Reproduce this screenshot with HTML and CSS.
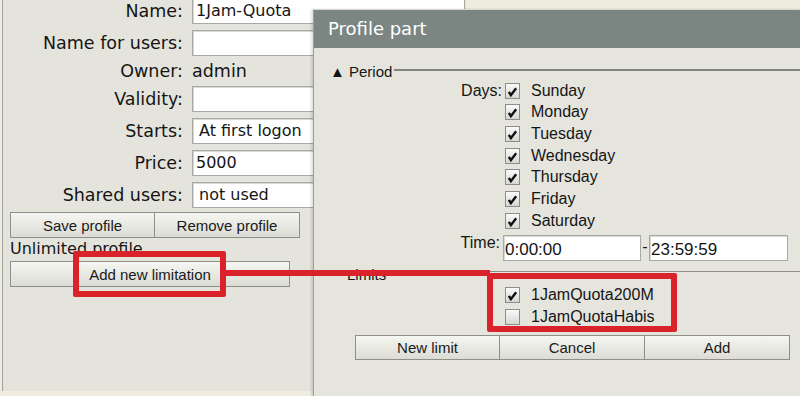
FILE: index.html
```html
<!DOCTYPE html>
<html lang="en">
<head>
  <meta charset="UTF-8">
  <title>Profile part</title>
  <link rel="stylesheet" href="styles.css">
</head>
<body>
  <div class="panel">
    <div class="form">
      <label>Name:</label><div class="field">1Jam-Quota</div>
      <label>Name for users:</label><div class="field"></div>
      <label>Owner:</label><div class="value">admin</div>
      <label>Validity:</label><div class="field"></div>
      <label>Starts:</label><div class="field pad">At first logon</div>
      <label>Price:</label><div class="field">5000</div>
      <label>Shared users:</label><div class="field pad">not used</div>
    </div>
    <div class="btn-row">
      <button class="btn">Save profile</button>
      <button class="btn">Remove profile</button>
    </div>
    <div class="section">Unlimited profile</div>
    <button class="btn wide">Add new limitation</button>
  </div>

  <div class="dialog">
    <div class="title">Profile part</div>
    <div class="legend"><span class="legend-text">&#9650; Period</span><span class="legend-line"></span></div>

    <div class="days">
      <div class="cap">Days:</div>
      <div class="check"><span class="box on"><svg viewBox="0 0 16 16"><path d="M3.5 8.5 L6 12.5 L12.5 4" /></svg></span></div>
      <div class="day">Sunday</div>
      <div></div>
      <div class="check"><span class="box on"><svg viewBox="0 0 16 16"><path d="M3.5 8.5 L6 12.5 L12.5 4" /></svg></span></div>
      <div class="day">Monday</div>
      <div></div>
      <div class="check"><span class="box on"><svg viewBox="0 0 16 16"><path d="M3.5 8.5 L6 12.5 L12.5 4" /></svg></span></div>
      <div class="day">Tuesday</div>
      <div></div>
      <div class="check"><span class="box on"><svg viewBox="0 0 16 16"><path d="M3.5 8.5 L6 12.5 L12.5 4" /></svg></span></div>
      <div class="day">Wednesday</div>
      <div></div>
      <div class="check"><span class="box on"><svg viewBox="0 0 16 16"><path d="M3.5 8.5 L6 12.5 L12.5 4" /></svg></span></div>
      <div class="day">Thursday</div>
      <div></div>
      <div class="check"><span class="box on"><svg viewBox="0 0 16 16"><path d="M3.5 8.5 L6 12.5 L12.5 4" /></svg></span></div>
      <div class="day">Friday</div>
      <div></div>
      <div class="check"><span class="box on"><svg viewBox="0 0 16 16"><path d="M3.5 8.5 L6 12.5 L12.5 4" /></svg></span></div>
      <div class="day">Saturday</div>
    </div>

    <div class="time-row">
      <div class="cap time-cap">Time:</div>
      <div class="field time">0:00:00</div>
      <div class="dash">-</div>
      <div class="field time">23:59:59</div>
    </div>

    <div class="sep"></div>
    <div class="limits-cap">Limits</div>
    <div class="days limits">
      <div></div>
      <div class="check"><span class="box on"><svg viewBox="0 0 16 16"><path d="M3.5 8.5 L6 12.5 L12.5 4" /></svg></span></div>
      <div class="day">1JamQuota200M</div>
      <div></div>
      <div class="check"><span class="box"></span></div>
      <div class="day">1JamQuotaHabis</div>
    </div>

    <div class="dlg-buttons">
      <button class="btn">New limit</button>
      <button class="btn">Cancel</button>
      <button class="btn">Add</button>
    </div>
  </div>

  <!-- annotation -->
  <div class="mark mark-left"></div>
  <div class="mark-line"></div>
  <div class="mark mark-right"></div>
</body>
</html>
```
FILE: styles.css
```css
body {
  margin: 0;
  width: 800px;
  height: 396px;
  overflow: hidden;
  background: #efede0;
  color: #151515;
  font-family: "DejaVu Sans", sans-serif;
  position: relative;
}

.panel {
  margin-left: 2px;
  width: 464px;
  height: 396px;
  border-left: 1px solid #a3a39d;
  background: #e4e4dc;
  box-sizing: border-box;
}

.form {
  display: grid;
  grid-template-columns: 180px 273px;
  grid-template-rows: 32px 32px 24px 32px 32px 32px 32px;
  column-gap: 9px;
  align-items: center;
  margin-top: -5px;
}

.form label {
  text-align: right;
  font-size: 17.5px;
}

.field {
  height: 26px;
  background: #fff;
  border: 1px solid #a9a9a4;
  box-sizing: border-box;
  font-size: 16px;
  line-height: 24px;
  padding-left: 3px;
  box-shadow: inset 1px 1px 0 #d8d8d4;
}

.field.pad {
  padding-left: 6px;
}

.value {
  font-size: 17.5px;
}

.btn {
  font-family: "Liberation Sans", Arial, sans-serif;
  font-size: 15px;
  color: #1a1a1a;
  height: 26px;
  padding: 0;
  border: 1px solid #8f8f8a;
  background: linear-gradient(#f6f6f2, #dcdcd5);
  box-sizing: border-box;
}

.btn-row {
  display: flex;
  margin: 1px 0 0 7px;
}

.btn-row .btn {
  width: 145px;
}

.btn-row .btn + .btn {
  border-left: none;
}

.section {
  margin-left: 7px;
  font-size: 16px;
  line-height: 22px;
}

.wide {
  display: block;
  margin: 1px 0 0 7px;
  width: 280px;
}

.dialog {
  position: absolute;
  left: 313px;
  top: 9px;
  right: 0;
  bottom: 0;
  background: #e5e5de;
  border-left: 1px solid #9d9d98;
  border-top: 1px solid #d8d8d0;
  box-shadow: -2px 0 2px rgba(0, 0, 0, 0.12);
}

.title {
  height: 38px;
  background: #7b8683;
  color: #fff;
  font-size: 18px;
  line-height: 38px;
  padding-left: 14px;
}

.legend {
  display: flex;
  align-items: center;
  margin-top: 14px;
  height: 18px;
  padding-left: 16px;
}

.legend-text {
  font-family: "Liberation Sans", Arial, sans-serif;
  font-size: 15px;
  white-space: nowrap;
  margin-right: 2px;
}

.legend-line {
  flex: 1;
  height: 2px;
  background: #85857f;
  margin-top: -3px;
}

.days {
  display: grid;
  grid-template-columns: 189px 26px auto;
  grid-auto-rows: 21.67px;
  align-items: center;
  font-family: "Liberation Sans", Arial, sans-serif;
  font-size: 16px;
}

.cap {
  text-align: right;
  padding-right: 1px;
  font-family: "Liberation Sans", Arial, sans-serif;
  font-size: 16px;
}

.check {
  padding-left: 2px;
  display: flex;
}

.box {
  width: 15px;
  height: 16px;
  border: 1px solid #8c8c88;
  background: linear-gradient(#fafafa, #d6d6d2);
  box-sizing: border-box;
  display: flex;
}

.box svg {
  width: 14px;
  height: 15px;
  fill: none;
  stroke: #111;
  stroke-width: 3;
}

.day {
  padding-left: 2px;
}

.time-row {
  display: grid;
  grid-template-columns: 189px 138px 8px 139px;
  margin-top: 3px;
  font-family: "Liberation Sans", Arial, sans-serif;
}

.time-cap {
  line-height: 16px;
  padding-right: 3px;
}

.field.time {
  font-family: "Liberation Sans", Arial, sans-serif;
  font-size: 17px;
  line-height: 28px;
  padding-left: 1px;
}

.dash {
  font-size: 16px;
  line-height: 24px;
  text-align: center;
}

.sep {
  height: 1px;
  background: #8e8e89;
  margin-top: 10px;
}

.limits-cap {
  height: 12px;
  line-height: 6px;
  padding-left: 33px;
  font-family: "Liberation Sans", Arial, sans-serif;
  font-size: 15px;
}

.limits {
  grid-auto-rows: 22px;
}

.dlg-buttons {
  display: flex;
  margin: 7px 0 0 41px;
}

.dlg-buttons .btn {
  width: 145px;
  height: 25px;
}

.dlg-buttons .btn + .btn {
  border-left: none;
}

.mark {
  position: absolute;
  border: 6px solid #d9222a;
  box-sizing: border-box;
  border-radius: 2px;
}

.mark-left {
  left: 73px;
  top: 251px;
  width: 153px;
  height: 46px;
}

.mark-right {
  left: 487px;
  top: 273px;
  width: 190px;
  height: 59px;
}

.mark-line {
  position: absolute;
  left: 226px;
  top: 270px;
  width: 264px;
  height: 6px;
  background: #d9222a;
}
```
